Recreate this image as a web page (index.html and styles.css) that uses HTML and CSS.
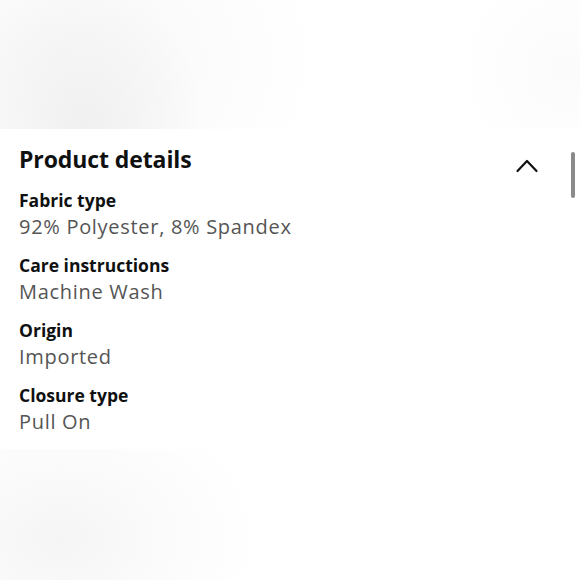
FILE: index.html
```html
<!DOCTYPE html>
<html>
<head>
<meta charset="utf-8">
<link rel="stylesheet" href="styles.css">
</head>
<body>
<div class="page">
  <div class="backdrop top"></div>
  <section class="panel">
    <div class="header">
      <h2 class="title">Product details</h2>
      <svg class="chevron" width="24" height="15" viewBox="0 0 24 15"><path d="M2.5 13 L12 3 L21.5 13" fill="none" stroke="#111" stroke-width="2.2" stroke-linecap="round" stroke-linejoin="round"/></svg>
    </div>
    <dl class="list">
      <div class="item"><dt>Fabric type</dt><dd>92% Polyester, 8% Spandex</dd></div>
      <div class="item"><dt>Care instructions</dt><dd>Machine Wash</dd></div>
      <div class="item"><dt>Origin</dt><dd>Imported</dd></div>
      <div class="item"><dt>Closure type</dt><dd>Pull On</dd></div>
    </dl>
    <div class="scrollbar"></div>
  </section>
  <div class="backdrop bottom"></div>
</div>
</body>
</html>
```
FILE: styles.css
```css
html, body { margin: 0; padding: 0; background: #fff; }
body { font-family: "Open Sans", "Noto Sans", sans-serif; width: 580px; height: 580px; overflow: hidden; }
.page { display: flex; flex-direction: column; height: 580px; }
.backdrop { flex: none; }
.backdrop.top {
  height: 129px;
  background:
    radial-gradient(ellipse 120px 140px at 85px 125px, #f0f0f0 0%, rgba(242,242,242,0.6) 50%, rgba(255,255,255,0) 100%),
    radial-gradient(ellipse 260px 200px at 60px 60px, rgba(247,247,247,1) 0%, rgba(255,255,255,0) 100%),
    radial-gradient(ellipse 110px 110px at 565px 70px, rgba(251,251,251,1) 0%, rgba(255,255,255,0) 100%),
    #fff;
}
.backdrop.bottom {
  flex: 1;
  background:
    radial-gradient(ellipse 200px 150px at 60px 90px, #f5f5f5 0%, rgba(248,248,248,0.6) 50%, rgba(255,255,255,0) 100%),
    #fff;
}
.panel { position: relative; background: #fff; padding: 14px 19px 14px 19px; height: 292px; }
.header { display: flex; justify-content: space-between; align-items: flex-start; padding-right: 22px; }
.title { margin: 0; font-size: 23px; font-weight: 700; color: #0f1111; line-height: 32px; letter-spacing: -0.1px; }
.chevron { margin-top: 15px; }
.list { margin: 12px 0 0 0; display: flex; flex-direction: column; gap: 11px; }
.item { display: flex; flex-direction: column; }
dt { font-size: 17.5px; font-weight: 700; color: #0f1111; line-height: 26px; letter-spacing: 0; }
dd { margin: 0; font-size: 20px; color: #555; line-height: 28px; letter-spacing: 0.7px; }
.scrollbar { position: absolute; right: 5px; top: 23px; width: 4px; height: 46px; border-radius: 2px; background: #8a8a8a; }
```
